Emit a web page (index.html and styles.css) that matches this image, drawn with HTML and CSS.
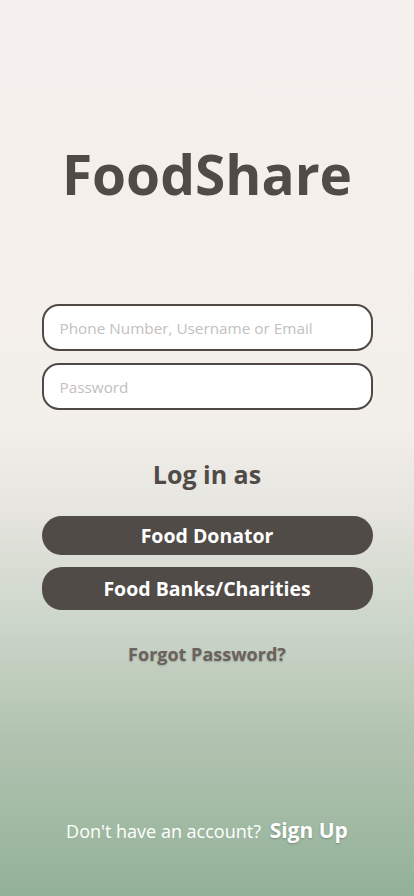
FILE: index.html
```html
<!DOCTYPE html>
<html lang="en">
<head>
<meta charset="utf-8">
<meta name="viewport" content="width=device-width, initial-scale=1">
<title>FoodShare</title>
<link rel="stylesheet" href="styles.css">
</head>
<body>
<main class="screen">
  <h1 class="brand">FoodShare</h1>
  <form class="login-form">
    <input class="field" type="text" placeholder="Phone Number, Username or Email">
    <input class="field" type="password" placeholder="Password">
  </form>
  <h2 class="login-as">Log in as</h2>
  <div class="roles">
    <button class="role-btn role-btn--donor" type="button">Food Donator</button>
    <button class="role-btn role-btn--charity" type="button">Food Banks/Charities</button>
  </div>
  <a class="forgot" href="#">Forgot Password?</a>
  <div class="spacer"></div>
  <p class="signup">Don't have an account? <a class="signup-link" href="#">Sign Up</a></p>
</main>
</body>
</html>
```

FILE: styles.css
```css
* { box-sizing: border-box; }
html, body { margin: 0; padding: 0; }
body {
  font-family: "Open Sans", "Noto Sans", sans-serif;
  color: #514b47;
}
.screen {
  width: 414px;
  height: 896px;
  display: flex;
  flex-direction: column;
  align-items: center;
  background: linear-gradient(to bottom, #f5f0ed 0%, #f3efeb 47%, #e6e5df 57%, #cbd5c8 70%, #b2c4b1 82%, #93b198 100%);
  overflow: hidden;
}
.brand {
  margin: 139px 0 0;
  font-size: 55px;
  line-height: 70px;
  font-weight: 700;
  color: #514b47;
}
.login-form {
  margin-top: 95px;
  display: flex;
  flex-direction: column;
  gap: 12px;
}
.field {
  width: 331px;
  height: 47px;
  border: 2px solid #4f4845;
  border-radius: 17px;
  background: #fff;
  padding: 0 16px;
  font-family: inherit;
  font-size: 15.3px;
  color: #514b47;
  outline: none;
}
.field::placeholder { color: #c3c0be; }
.login-as {
  margin: 47px 0 0;
  font-size: 25px;
  line-height: 34px;
  font-weight: 700;
  color: #514b47;
}
.roles {
  margin-top: 25px;
  display: flex;
  flex-direction: column;
  gap: 12px;
}
.role-btn {
  width: 331px;
  border: 0;
  border-radius: 20px;
  background: #514b47;
  color: #fff;
  font-family: inherit;
  font-weight: 700;
  font-size: 19.5px;
  padding: 0;
}
.role-btn--donor { height: 39px; }
.role-btn--charity { height: 43px; }
.forgot {
  margin-top: 32px;
  font-size: 18px;
  line-height: 24px;
  font-weight: 700;
  color: #6b615d;
  text-decoration: none;
  text-shadow: 0 1px 2px rgba(0,0,0,0.2);
}
.spacer { flex: 1; }
.signup {
  margin: 0 0 51px;
  font-size: 18px;
  color: #fff;
  line-height: 28px;
}
.signup-link {
  margin-left: 4px;
  font-size: 21px;
  font-weight: 700;
  color: #fff;
  text-decoration: none;
  text-shadow: 0 1px 2px rgba(0,0,0,0.25);
}
```
